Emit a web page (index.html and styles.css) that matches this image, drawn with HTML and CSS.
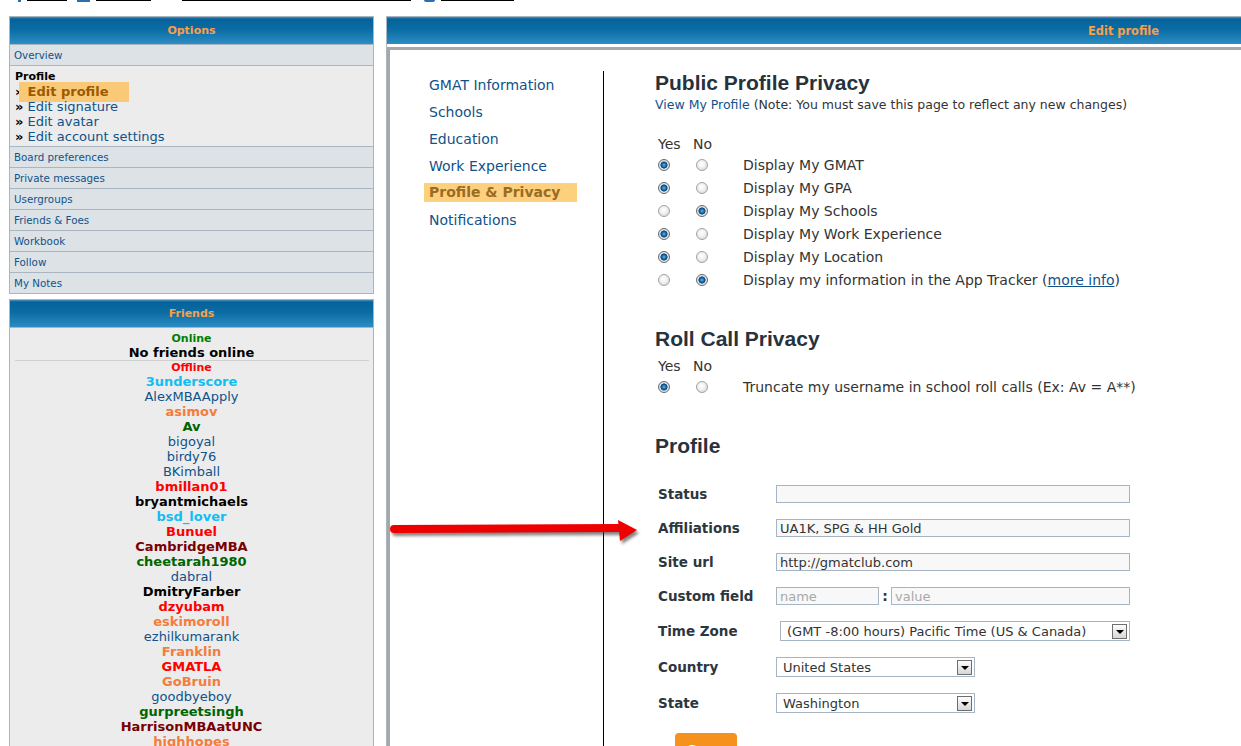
FILE: index.html
```html
<!DOCTYPE html>
<html lang="en">
<head>
  <meta charset="UTF-8">
  <title>Edit profile</title>
  <link rel="stylesheet" href="styles.css">
</head>
<body>

<div class="topbar">
  <span class="tb-ico tb-small"></span>
  <span class="tb-link tb-w1"></span>
  <span class="tb-ico tb-square"></span>
  <span class="tb-link tb-w2"></span>
  <span class="tb-link tb-w3"></span>
  <span class="tb-ico tb-circle"></span>
  <span class="tb-link tb-w4"></span>
</div>

<div class="layout">
  <div class="sidebar">
    <div class="panel">
      <div class="panel-head">Options</div>
      <div class="opt-row"><a>Overview</a></div>
      <div class="opt-group">
        <div class="opt-title">Profile</div>
        <div class="opt-link"><b>&raquo;</b> <a class="current">Edit profile</a></div>
        <div class="opt-link"><b>&raquo;</b> <a>Edit signature</a></div>
        <div class="opt-link"><b>&raquo;</b> <a>Edit avatar</a></div>
        <div class="opt-link"><b>&raquo;</b> <a>Edit account settings</a></div>
      </div>
      <div class="opt-row"><a>Board preferences</a></div>
      <div class="opt-row"><a>Private messages</a></div>
      <div class="opt-row"><a>Usergroups</a></div>
      <div class="opt-row"><a>Friends &amp; Foes</a></div>
      <div class="opt-row"><a>Workbook</a></div>
      <div class="opt-row"><a>Follow</a></div>
      <div class="opt-row"><a>My Notes</a></div>
    </div>

    <div class="panel friends">
      <div class="panel-head">Friends</div>
      <div class="friends-body">
        <div class="f-online">Online</div>
        <div class="f-none">No friends online</div>
        <div class="f-sep"></div>
        <div class="f-offline">Offline</div>
        <a class="f c-cyan">3underscore</a>
        <a class="f">AlexMBAApply</a>
        <a class="f c-orange">asimov</a>
        <a class="f c-green">Av</a>
        <a class="f">bigoyal</a>
        <a class="f">birdy76</a>
        <a class="f">BKimball</a>
        <a class="f c-red">bmillan01</a>
        <a class="f c-black">bryantmichaels</a>
        <a class="f c-cyan">bsd_lover</a>
        <a class="f c-red">Bunuel</a>
        <a class="f c-maroon">CambridgeMBA</a>
        <a class="f c-green">cheetarah1980</a>
        <a class="f">dabral</a>
        <a class="f c-black">DmitryFarber</a>
        <a class="f c-red">dzyubam</a>
        <a class="f c-orange">eskimoroll</a>
        <a class="f">ezhilkumarank</a>
        <a class="f c-orange">Franklin</a>
        <a class="f c-red">GMATLA</a>
        <a class="f c-orange">GoBruin</a>
        <a class="f">goodbyeboy</a>
        <a class="f c-green">gurpreetsingh</a>
        <a class="f c-maroon">HarrisonMBAatUNC</a>
        <a class="f c-orange">highhopes</a>
      </div>
    </div>
  </div>

  <div class="main">
    <div class="panel-head main-head">Edit profile</div>
    <div class="main-box">
      <ul class="tabs">
        <li><a>GMAT Information</a></li>
        <li><a>Schools</a></li>
        <li><a>Education</a></li>
        <li><a>Work Experience</a></li>
        <li><a class="current">Profile &amp; Privacy</a></li>
        <li><a>Notifications</a></li>
      </ul>

      <div class="content">
        <h2>Public Profile Privacy</h2>
        <div class="note"><a>View My Profile</a> (Note: You must save this page to reflect any new changes)</div>

        <div class="privacy">
          <div class="pp-head"><span>Yes</span><span>No</span></div>
          <div class="pp-row"><span class="radio on"></span><span class="radio"></span><span>Display My GMAT</span></div>
          <div class="pp-row"><span class="radio on"></span><span class="radio"></span><span>Display My GPA</span></div>
          <div class="pp-row"><span class="radio"></span><span class="radio on"></span><span>Display My Schools</span></div>
          <div class="pp-row"><span class="radio on"></span><span class="radio"></span><span>Display My Work Experience</span></div>
          <div class="pp-row"><span class="radio on"></span><span class="radio"></span><span>Display My Location</span></div>
          <div class="pp-row"><span class="radio"></span><span class="radio on"></span><span>Display my information in the App Tracker (<a class="more">more info</a>)</span></div>
        </div>

        <h2 class="section">Roll Call Privacy</h2>
        <div class="privacy">
          <div class="pp-head pp-head-tight"><span>Yes</span><span>No</span></div>
          <div class="pp-row"><span class="radio on"></span><span class="radio"></span><span>Truncate my username in school roll calls (Ex: Av = A**)</span></div>
        </div>

        <h2 class="section">Profile</h2>
        <div class="form">
          <div class="form-row">
            <label>Status</label>
            <input class="field field-wide" type="text">
          </div>
          <div class="form-row">
            <label>Affiliations</label>
            <input class="field field-wide" type="text" value="UA1K, SPG &amp; HH Gold">
          </div>
          <div class="form-row">
            <label>Site url</label>
            <input class="field field-wide" type="text" value="http://gmatclub.com">
          </div>
          <div class="form-row">
            <label>Custom field</label>
            <input class="field field-name" type="text" placeholder="name">
            <b class="colon">:</b>
            <input class="field field-value" type="text" placeholder="value">
          </div>
          <div class="form-row form-row-tall">
            <label>Time Zone</label>
            <div class="select select-tz"><span>(GMT -8:00 hours) Pacific Time (US &amp; Canada)</span><i class="sel-btn"></i></div>
          </div>
          <div class="form-row form-row-tall">
            <label>Country</label>
            <div class="select"><span>United States</span><i class="sel-btn"></i></div>
          </div>
          <div class="form-row form-row-tall">
            <label>State</label>
            <div class="select"><span>Washington</span><i class="sel-btn"></i></div>
          </div>
          <button class="save">Save</button>
        </div>
      </div>
    </div>
  </div>
</div>

<svg class="arrow" width="262" height="40" viewBox="0 0 262 40" xmlns="http://www.w3.org/2000/svg">
  <defs>
    <filter id="blur" x="-10%" y="-50%" width="120%" height="200%">
      <feGaussianBlur stdDeviation="1.6"/>
    </filter>
  </defs>
  <g fill="#333" stroke="#333" opacity="0.6" filter="url(#blur)" transform="translate(2 3)">
    <line x1="8" y1="17" x2="234" y2="16" stroke-width="8" stroke-linecap="round"/>
    <polygon points="232,8 251,18 234,29" stroke="none"/>
  </g>
  <line x1="8" y1="17" x2="234" y2="16" stroke="#ee0000" stroke-width="8" stroke-linecap="round"/>
  <polygon points="232,8 251,18 234,29" fill="#ee0000"/>
</svg>

</body>
</html>
```

FILE: styles.css
```css
* {
  box-sizing: border-box;
}

html, body {
  overflow: hidden;
}

body {
  margin: 0;
  background: #fff;
  font-family: "DejaVu Sans", Verdana, sans-serif;
  color: #333;
  height: 746px;
}

a {
  color: #105289;
  text-decoration: none;
  cursor: pointer;
}

/* top navigation, cut off by the screenshot */
.topbar {
  height: 2px;
  overflow: hidden;
  display: flex;
  align-items: flex-start;
  padding-left: 18px;
}

.tb-link {
  display: inline-block;
  height: 1px;
  background: #000;
}

.tb-ico {
  display: inline-block;
  height: 2px;
  background: #2a6fb0;
}

.tb-small { width: 3px; margin-right: 6px; }
.tb-square { width: 13px; margin: 0 6px 0 10px; }
.tb-circle { width: 11px; margin: 0 6px 0 13px; border-radius: 0 0 6px 6px; }
.tb-w1 { width: 40px; }
.tb-w2 { width: 55px; }
.tb-w3 { width: 229px; margin-left: 31px; }
.tb-w4 { width: 73px; }

/* page layout */
.layout {
  display: flex;
  gap: 12px;
  padding: 14px 0 0 9px;
}

.sidebar {
  width: 365px;
  flex-shrink: 0;
}

.panel {
  border: 1px solid #a9b6c1;
  background: #ececec;
}

.panel-head {
  height: 27px;
  line-height: 28px;
  background: linear-gradient(to bottom, #4d8fba 0, #05639b 2px, #0b6ba3 45%, #2b8dc3 100%);
  color: #f7a04c;
  font-size: 11px;
  font-weight: bold;
  text-align: center;
}

.opt-row {
  height: 21px;
  line-height: 20px;
  border-top: 1px solid #a9b6c1;
  background: #dde2e6;
  padding-left: 4px;
  font-size: 10.3px;
}

.opt-group {
  border-top: 1px solid #a9b6c1;
  padding: 4px 0 2px 5px;
  height: 81px;
}

.opt-title {
  font-size: 11px;
  font-weight: bold;
  color: #000;
  line-height: 14px;
}

.opt-link {
  height: 15px;
  font-size: 13px;
  line-height: 15px;
  white-space: nowrap;
}

.opt-link b {
  color: #000;
}

.opt-link a.current {
  background: #f9c978;
  color: #9a5a00;
  font-weight: bold;
  padding: 2px 20px 3px 9px;
  margin-left: -9px;
}

.friends {
  margin-top: 5px;
  min-height: 460px;
}

.friends-body {
  border-top: 1px solid #a9b6c1;
  padding: 4px 4px 20px;
  text-align: center;
}

.f-online, .f-offline {
  font-size: 11px;
  font-weight: bold;
  line-height: 14px;
}

.f-online { color: #008000; }
.f-offline { color: #ff0000; }

.f-none {
  font-size: 13px;
  font-weight: bold;
  line-height: 14px;
  color: #000;
}

.f-sep {
  height: 1px;
  background: #d0d0d0;
  margin: 0 0 0 1px;
}

.f {
  display: block;
  font-size: 13px;
  line-height: 15px;
  color: #105289;
}

.f-offline + .f {
  margin-top: -1px;
}

.c-cyan { color: #12bdf2; font-weight: bold; }
.c-orange { color: #f47c3c; font-weight: bold; }
.c-green { color: #006400; font-weight: bold; }
.c-red { color: #ff0000; font-weight: bold; }
.c-black { color: #000; font-weight: bold; }
.c-maroon { color: #7a0000; font-weight: bold; }

/* main area */
.main {
  flex: 1;
  border-top: 1px solid #a9b6c1;
  border-left: 1px solid #a9b6c1;
}

.main-head {
  text-align: right;
  padding-right: 82px;
  font-size: 11.4px;
}

.main-box {
  margin-top: 3px;
  border-top: 3px solid #a7a7a7;
  border-left: 3px solid #a7a7a7;
  padding-top: 21px;
  display: flex;
  min-height: 740px;
}

.tabs {
  list-style: none;
  margin: 0;
  padding: 0 0 0 34px;
  width: 214px;
  border-right: 1px solid #000;
  flex-shrink: 0;
}

.tabs li {
  height: 27px;
  display: flex;
  align-items: center;
  font-size: 14px;
}

.tabs a {
  padding: 0 5px;
}

.tabs a.current {
  background: #fdd07d;
  color: #9b6b22;
  font-weight: bold;
  line-height: 19px;
  padding: 0 17px 0 5px;
}

.content {
  padding-left: 51px;
  flex: 1;
}

h2 {
  font-family: "Liberation Sans", Arial, sans-serif;
  font-size: 21px;
  line-height: 24px;
  color: #27323d;
  margin: 0;
}

h2.section {
  margin-top: 36px;
}

.note {
  font-size: 12.5px;
  line-height: 16px;
  margin-top: 2px;
}

.privacy {
  padding-left: 3px;
  font-size: 14px;
}

.pp-head {
  display: flex;
  line-height: 18px;
  margin-top: 22px;
}

.pp-head span:first-child {
  width: 35px;
}

.pp-head-tight {
  margin-top: 6px;
}

.pp-row {
  display: grid;
  grid-template-columns: 38px 47px auto;
  align-items: center;
  height: 23px;
}

.radio {
  width: 12px;
  height: 12px;
  border-radius: 50%;
  border: 1px solid #a2a2a2;
  background: radial-gradient(circle at 45% 40%, #ffffff 0, #f2f2f2 40%, #cfcfcf 100%);
}

.radio.on {
  border-color: #5f6b75;
  background: radial-gradient(circle at 50% 50%, #5cb8f0 0, #1a74b8 1.8px, #0b3f6c 3.2px, #eaeaea 3.9px, #d0d0d0 100%);
}

a.more {
  text-decoration: underline;
}

/* profile form */
.form {
  padding-left: 3px;
  margin-top: 19px;
}

.form-row {
  display: flex;
  align-items: center;
  height: 34px;
}

.form-row-tall {
  height: 36px;
}

.form-row label {
  width: 118px;
  font-size: 13.5px;
  font-weight: bold;
  color: #2c3640;
}

.field {
  height: 18px;
  border: 1px solid #a6b5c4;
  background: #f8f8f8;
  font-family: "DejaVu Sans", Verdana, sans-serif;
  font-size: 13px;
  color: #333;
  padding: 0 3px;
  margin: 0;
}

.field::placeholder {
  color: #a8a8a8;
}

.field-wide { width: 354px; }
.field-name { width: 103px; }
.field-value { width: 239px; }

.colon {
  width: 12px;
  text-align: center;
  font-size: 14px;
}

.select {
  width: 199px;
  height: 20px;
  border: 1px solid #a6b5c4;
  background: #fff;
  display: flex;
  align-items: center;
  justify-content: space-between;
  padding: 0 2px 0 6px;
  font-size: 13px;
}

.select-tz {
  width: 350px;
  margin-left: 4px;
}

.sel-btn {
  width: 15px;
  height: 15px;
  border: 1px solid #6e6e6e;
  background: linear-gradient(to bottom, #fdfdfd, #d6d6d6);
  display: flex;
  align-items: center;
  justify-content: center;
}

.sel-btn::after {
  content: "";
  border-top: 4px solid #000;
  border-left: 4px solid transparent;
  border-right: 4px solid transparent;
  margin-top: 2px;
}

.save {
  margin: 12px 0 0 17px;
  width: 62px;
  height: 34px;
  border: none;
  border-radius: 4px;
  background: #f7911d;
  color: #fff;
  font-family: "DejaVu Sans", Verdana, sans-serif;
  font-size: 14px;
  font-weight: bold;
}

/* annotation arrow over the page */
.arrow {
  position: absolute;
  left: 386px;
  top: 512px;
}
```
